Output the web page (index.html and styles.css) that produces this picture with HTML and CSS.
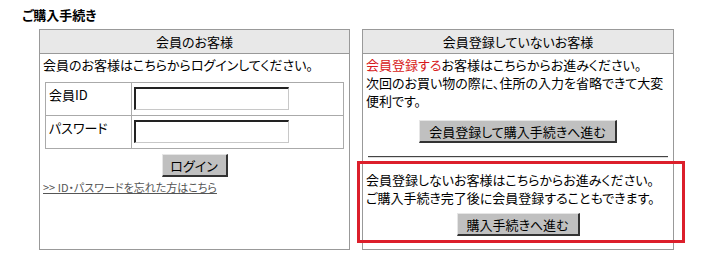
FILE: index.html
```html
<!DOCTYPE html>
<html lang="ja">
<head>
<meta charset="UTF-8" />
<title>ご購入手続き</title>
<link rel="stylesheet" href="styles.css">
</head>
<body>

<h1 class="page-title">ご購入手続き</h1>

<div class="columns">
  <div class="box">
    <div class="box-head">会員のお客様</div>
    <div class="box-body">
      <p class="lead">会員のお客様はこちらからログインしてください。</p>
      <table class="login">
        <tr>
          <td class="label">会員ID</td>
          <td class="field"><input type="text" /></td>
        </tr>
        <tr>
          <td class="label">パスワード</td>
          <td class="field"><input type="password" /></td>
        </tr>
      </table>
      <div class="actions"><button class="btn btn-login">ログイン</button></div>
      <a class="forgot" href="#">&gt;&gt; ID・パスワードを忘れた方はこちら</a>
    </div>
  </div>

  <div class="box">
    <div class="box-head">会員登録していないお客様</div>
    <div class="box-body">
      <p class="lead"><span class="red">会員登録する</span>お客様はこちらからお進みください。<br>次回のお買い物の際に、住所の入力を省略できて大変<br>便利です。</p>
      <div class="actions"><button class="btn btn-register">会員登録して購入手続きへ進む</button></div>
      <hr class="divider">
      <div class="guest">
        <p class="lead">会員登録しないお客様はこちらからお進みください。<br>ご購入手続き完了後に会員登録することもできます。</p>
        <div class="actions"><button class="btn btn-guest">購入手続きへ進む</button></div>
      </div>
    </div>
  </div>
</div>

</body>
</html>
```

FILE: styles.css
```css
body {
  margin: 0;
  padding: 6px 0 0 0;
  font-family: "Noto Sans CJK JP", "Noto Sans", sans-serif;
  font-size: 13px;
  color: #000;
  background: #fff;
  font-feature-settings: "palt";
}
.page-title {
  margin: 0 0 0 22px;
  font-size: 13px;
  font-weight: bold;
  line-height: 18px;
}
.columns {
  display: grid;
  grid-template-columns: 311px 312px;
  column-gap: 12px;
  margin: 5px 0 0 39px;
}
.box {
  border: 1px solid #999;
}
.box-head {
  height: 23px;
  line-height: 23px;
  text-align: center;
  background: #e8e8e8;
  border-bottom: 1px solid #999;
}
.box-body {
  padding: 2px 3px 6px 3px;
}
.lead {
  margin: 0;
  line-height: 18px;
}
.red {
  color: #d71920;
}

/* login table */
.login {
  border-collapse: collapse;
  width: 299px;
  margin: 8px 2px 0 2px;
  border: 1px solid #aaa;
}
.login td {
  border: 1px solid #aaa;
  vertical-align: top;
  padding: 0;
}
.login .label {
  width: 79px;
  padding: 3px 3px 0 3px;
  line-height: 18px;
}
.login .field {
  padding: 4px 0 5px 2px;
  height: 23px;
}
.login input {
  display: block;
  box-sizing: border-box;
  width: 155px;
  height: 23px;
  margin: 0;
  padding: 0 2px;
  border-top: 2px solid #222;
  border-left: 2px solid #222;
  border-right: 1px solid #c8c8c8;
  border-bottom: 1px solid #c8c8c8;
  background: #fff;
}

/* buttons */
.actions {
  display: flex;
  justify-content: center;
}
.btn {
  box-sizing: border-box;
  height: 23px;
  padding: 0;
  white-space: nowrap;
  font-family: inherit;
  font-size: 13px;
  font-feature-settings: "palt";
  line-height: 19px;
  color: #000;
  background: #c0c0c0;
  border-top: 1px solid #e6e6e6;
  border-left: 1px solid #e6e6e6;
  border-right: 2px solid #333;
  border-bottom: 2px solid #333;
}
.btn-login {
  width: 66px;
  margin-top: 5px;
}
.btn-register {
  width: 198px;
  margin-top: 10px;
}
.btn-guest {
  width: 123px;
  margin-top: 6px;
}

.forgot {
  display: inline-block;
  margin-top: 3px;
  font-size: 11px;
  line-height: 14px;
  color: #555;
}

.divider {
  margin: 13px 2px 0 2px;
  border: 0;
  border-top: 1px solid #444;
  border-bottom: 1px solid #ddd;
}

/* highlighted guest section (red frame drawn over it) */
.guest {
  position: relative;
  padding-top: 13px;
  padding-bottom: 7px;
}
.guest::after {
  content: "";
  position: absolute;
  top: 3px;
  bottom: 0;
  left: -9px;
  right: -15px;
  border: 3px solid #dc1f2b;
  pointer-events: none;
}
```
